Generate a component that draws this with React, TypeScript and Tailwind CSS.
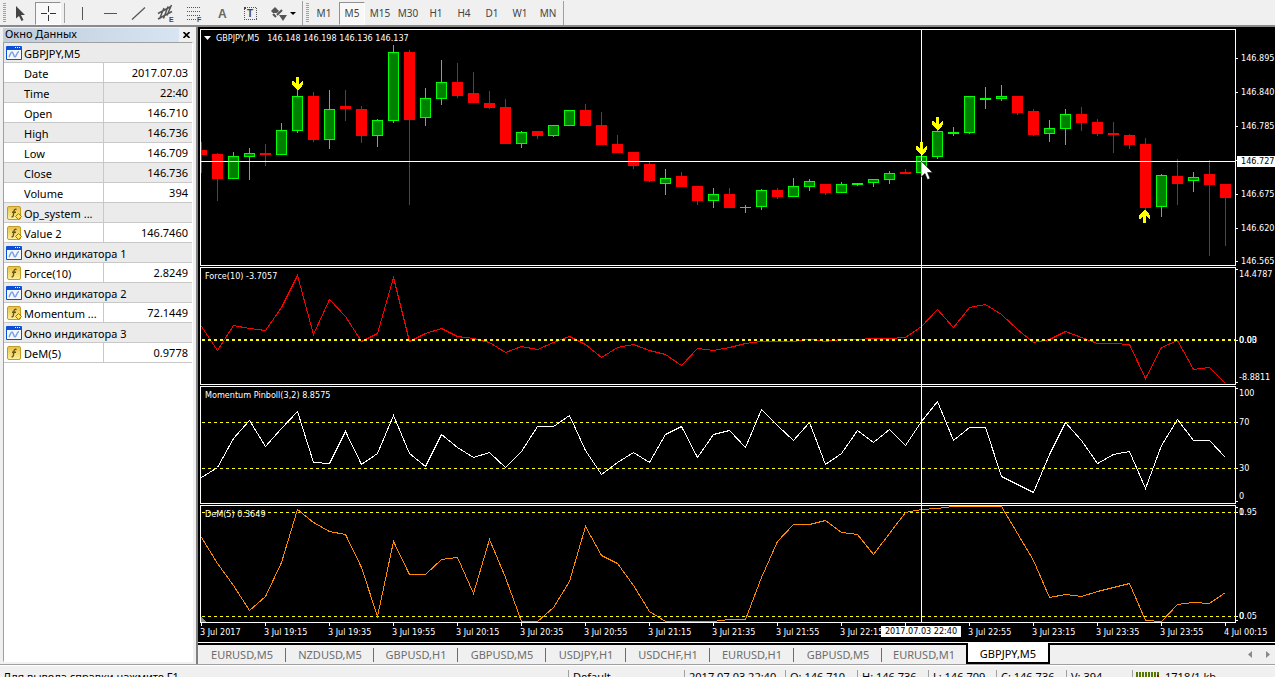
import React from "react";

const CHART_FONT = "font-['DejaVu_Sans_Condensed','DejaVu_Sans',sans-serif]";

const STEP = 16;

/* wick top, body top, body bottom, wick bottom, rising */
type Candle = [number, number, number, number, 0 | 1];

const candles: Candle[] = [
  [142, 150, 155, 173, 0], [153, 154, 179, 201, 0], [152, 156, 179, 179, 1], [148, 153, 157, 180, 1],
  [144, 153, 155, 166, 0], [123, 130, 155, 155, 1], [90, 96, 131, 133, 1], [92, 96, 140, 142, 0],
  [90, 109, 140, 149, 1], [90, 106, 109, 121, 0], [106, 109, 136, 143, 0], [119, 120, 136, 147, 1],
  [45, 52, 121, 123, 1], [50, 52, 120, 205, 0], [88, 98, 118, 126, 1], [60, 82, 99, 105, 1],
  [63, 82, 96, 98, 0], [72, 93, 103, 103, 0], [91, 103, 108, 109, 0], [99, 107, 144, 144, 0],
  [131, 132, 144, 148, 1], [131, 131, 136, 139, 0], [125, 125, 136, 137, 1], [110, 110, 126, 126, 1],
  [104, 110, 126, 126, 0], [112, 125, 145, 145, 0], [135, 144, 153, 153, 0], [152, 152, 166, 169, 0],
  [162, 164, 181, 182, 0], [169, 178, 184, 195, 1], [172, 176, 187, 187, 0], [186, 186, 201, 205, 0],
  [188, 194, 201, 208, 1], [188, 194, 208, 208, 0], [205, 207, 208, 213, 1], [189, 190, 207, 210, 1],
  [188, 190, 197, 199, 0], [178, 186, 197, 197, 1], [179, 181, 187, 191, 1], [184, 184, 193, 195, 0],
  [182, 184, 193, 193, 1], [183, 183, 185, 186, 1], [179, 179, 183, 187, 1], [171, 173, 180, 184, 1],
  [169, 172, 174, 174, 0], [156, 156, 173, 173, 1], [130, 131, 157, 159, 1], [127, 132, 134, 136, 1],
  [96, 96, 133, 134, 1], [87, 98, 100, 109, 1], [85, 96, 99, 101, 1], [96, 96, 113, 115, 0],
  [109, 111, 135, 136, 0], [120, 128, 134, 142, 1], [109, 114, 129, 145, 1], [107, 114, 123, 131, 0],
  [119, 122, 134, 136, 0], [122, 133, 135, 153, 0], [134, 135, 145, 149, 0], [138, 144, 208, 212, 0],
  [174, 175, 207, 217, 1], [159, 176, 184, 205, 0], [172, 177, 181, 192, 1], [160, 174, 185, 256, 0],
  [184, 184, 198, 246, 0],
];

const force = [
  326, 350, 325, 328, 330, 307, 275, 334, 299, 316, 341, 333, 277, 341, 333, 328, 336, 338, 342, 352, 346, 349,
  342, 336, 344, 357, 347, 344, 350, 354, 365, 348, 350, 347, 343, 341, 341, 341, 339, 341, 339, 339, 338, 338,
  337, 326, 309, 327, 307, 304, 314, 329, 342, 339, 331, 337, 343, 343, 344, 378, 347, 340, 369, 367, 383,
];
const momentum = [
  477, 467, 438, 420, 446, 428, 411, 462, 463, 431, 464, 453, 415, 453, 466, 434, 447, 457, 452, 467, 451, 426,
  426, 415, 450, 474, 462, 452, 462, 434, 426, 457, 434, 430, 447, 409, 425, 440, 422, 464, 453, 430, 442, 429,
  445, 421, 401, 440, 427, 427, 476, 484, 492, 454, 422, 440, 463, 454, 451, 488, 445, 419, 440, 440, 457,
];
const dem = [
  537, 563, 585, 610, 596, 562, 509, 522, 531, 534, 567, 616, 541, 574, 574, 559, 557, 593, 539, 577, 621, 621,
  607, 581, 526, 555, 563, 585, 611, 621, 621, 621, 621, 619, 619, 577, 541, 524, 524, 520, 532, 534, 554, 533,
  512, 509, 508, 506, 506, 506, 506, 533, 560, 597, 594, 596, 591, 587, 583, 620, 621, 604, 602, 603, 592,
];

const times = [
  "3 Jul 2017", "3 Jul 19:15", "3 Jul 19:35", "3 Jul 19:55", "3 Jul 20:15", "3 Jul 20:35", "3 Jul 20:55",
  "3 Jul 21:15", "3 Jul 21:35", "3 Jul 21:55", "3 Jul 22:15", "", "3 Jul 22:55", "3 Jul 23:15", "3 Jul 23:35",
  "3 Jul 23:55", "4 Jul 00:15",
];

type Label = { y: number; text: string; tick?: boolean };

function Panel({
  top,
  height,
  title,
  labels,
  ticks = [],
  children,
}: {
  top: number;
  height: string;
  title: React.ReactNode;
  labels: Label[];
  ticks?: number[];
  children: React.ReactNode;
}) {
  return (
    <section className={`grid shrink-0 grid-cols-[minmax(0,1fr)_39px] ${height}`}>
      <div className="relative overflow-hidden border border-white">
        <svg className="block h-full w-full" shapeRendering="crispEdges" aria-hidden="true">
          <g transform={`translate(0 ${-(top + 1)})`}>{children}</g>
        </svg>
        <h2 className="absolute left-1 top-[2px] flex items-center text-[9px] leading-3 whitespace-pre">{title}</h2>
      </div>
      <div className="relative text-[9px] leading-3">
        {ticks.map((y) => (
          <i key={y} className="absolute left-0 h-px w-[2px] bg-white" style={{ top: y - top }} />
        ))}
        {labels.map((l, i) => (
          <span key={i} className={l.tick ? "absolute left-[5px]" : "absolute left-[3px]"} style={{ top: l.y - top - 6 }}>
            {l.text}
          </span>
        ))}
      </div>
    </section>
  );
}

function Series({ data, color }: { data: number[]; color: string }) {
  return (
    <polyline
      points={data.map((y, i) => `${i * STEP + 0.5},${y + 0.5}`).join(" ")}
      fill="none"
      stroke={color}
      strokeWidth="1"
    />
  );
}

function Level({ y, thick }: { y: number; thick?: boolean }) {
  return (
    <line
      x1="1"
      x2="100%"
      y1={thick ? y : y + 0.5}
      y2={thick ? y : y + 0.5}
      stroke="#ffff00"
      strokeWidth={thick ? 2 : 1}
      strokeDasharray="3 3"
    />
  );
}

function Marker({ x, y, up }: { x: number; y: number; up?: boolean }) {
  return (
    <path
      transform={`translate(${x} ${y}) ${up ? "scale(1 -1)" : ""}`}
      d="M-1 0H2V7L5 4H6V7L5 9L2 12L1 13H0L-1 12L-4 9L-5 7V4H-4L-1 7Z"
      fill="#ffff00"
    />
  );
}

function WindowIcon() {
  return (
    <svg width="16" height="14" viewBox="0 0 16 14" className="block" aria-hidden="true">
      <rect width="16" height="14" rx="1" fill="#0a4fd6" />
      <rect x="1" y="4" width="14" height="9" fill="#f4f8ff" />
      <path d="M9 1.5h1M11 1.5h1M13 1.5h1" stroke="#fff" />
      <path d="M3 11C4 10 4.500 6 6 6S7.500 11 9 11 10.500 6 13 5.500" fill="none" stroke="#7d9be6" strokeWidth="1.500" />
    </svg>
  );
}

function FunctionIcon({ badge }: { badge?: boolean }) {
  return (
    <svg width="16" height="14" viewBox="0 0 16 14" className="block" aria-hidden="true">
      <defs>
        <linearGradient id="fx" x1="0" y1="0" x2="0" y2="1">
          <stop offset="0" stopColor="#e6c24a" />
          <stop offset="1" stopColor="#fdf09c" />
        </linearGradient>
      </defs>
      <rect x="1.500" y=".5" width="13" height="13" rx="1.500" fill="url(#fx)" stroke="#c39a24" />
      <path
        d="M10.500 3.500C9 3 8.200 3.500 8 5L7.300 9.500C7.100 10.800 6.500 11 5.500 10.700M6 6.300H10"
        fill="none"
        stroke="#6b5410"
        strokeWidth="1.400"
      />
      {badge && <path d="M12.500 7.500L15.500 10.500L12.500 13.500L9.500 10.500Z" fill="#ffe45c" stroke="#9a7a10" />}
    </svg>
  );
}

type Row = { kind?: "window" | "fn" | "fnb"; name: string; value?: string };

const rows: Row[] = [
  { kind: "window", name: "GBPJPY,M5" },
  { name: "Date", value: "2017.07.03" },
  { name: "Time", value: "22:40" },
  { name: "Open", value: "146.710" },
  { name: "High", value: "146.736" },
  { name: "Low", value: "146.709" },
  { name: "Close", value: "146.736" },
  { name: "Volume", value: "394" },
  { kind: "fnb", name: "Op_system ...", value: "" },
  { kind: "fnb", name: "Value 2", value: "146.7460" },
  { kind: "window", name: "Окно индикатора 1" },
  { kind: "fn", name: "Force(10)", value: "2.8249" },
  { kind: "window", name: "Окно индикатора 2" },
  { kind: "fnb", name: "Momentum ...", value: "72.1449" },
  { kind: "window", name: "Окно индикатора 3" },
  { kind: "fn", name: "DeM(5)", value: "0.9778" },
];

function DataWindow() {
  return (
    <aside className="flex w-[196px] shrink-0 flex-col px-[3px] pb-[2px] pt-px">
      <div className="flex h-[14px] shrink-0 items-center text-[11px] leading-[12px]">
        <h1 className="h-full flex-1 bg-linear-to-r from-[#bfcddb] to-[#d7e4f2] pl-[2px]">Окно Данных</h1>
        <button aria-label="Закрыть" className="flex h-full w-[14px] items-center justify-center">
          <svg width="7" height="6" viewBox="0 0 7 6" aria-hidden="true">
            <path d="M.5 0L6.500 6M6.500 0L.5 6" stroke="#000" strokeWidth="1.600" />
          </svg>
        </button>
      </div>
      <div className="min-h-0 flex-1 overflow-hidden border border-t-[#a0a0a0] border-l-[#a0a0a0] border-r-white border-b-white bg-white">
        <table className="w-full table-fixed border-separate border-spacing-0 text-[11px]">
          <colgroup>
            <col className="w-[100px]" />
            <col />
          </colgroup>
          <tbody>
            {rows.map((r, i) => (
              <tr key={i} className={i % 2 === 0 ? "bg-[#ebebeb]" : "bg-white"}>
                <th
                  scope="row"
                  colSpan={r.kind === "window" ? 2 : 1}
                  className={`h-5 border-b border-[#c8c8c8] p-0 text-left font-normal ${r.kind === "window" ? "" : "border-r"}`}
                >
                  <span className="flex h-[19px] items-center gap-[2px] whitespace-nowrap pl-[2px]">
                    <span className="w-4">
                      {r.kind === "window" && <WindowIcon />}
                      {r.kind === "fn" && <FunctionIcon />}
                      {r.kind === "fnb" && <FunctionIcon badge />}
                    </span>
                    <span className="pt-[2px] leading-[17px]">{r.name}</span>
                  </span>
                </th>
                {r.kind !== "window" && (
                  <td className="h-5 border-b border-[#c8c8c8] p-0 pr-1 text-right leading-[19px]">{r.value}</td>
                )}
              </tr>
            ))}
          </tbody>
        </table>
      </div>
    </aside>
  );
}

const tools: { name: string; icon: React.ReactNode }[] = [
  { name: "Вертикальная линия", icon: <path d="M10.500 4V17" stroke="#555" /> },
  { name: "Горизонтальная линия", icon: <path d="M4 10.500H17" stroke="#555" /> },
  { name: "Трендовая линия", icon: <path d="M4 16.500L17 4.500" stroke="#555" strokeWidth="1.200" /> },
  {
    name: "Канал",
    icon: (
      <>
        <path
          d="M2 10.500L15 3.500M2 16L16 8.500M3.500 16L8 5M7.500 15.500L12 3.500M11 12.500L15.500 2"
          stroke="#555"
          strokeWidth="1.500"
        />
        <text x="13" y="19" fontSize="7" fontWeight="bold" fill="#444">E</text>
      </>
    ),
  },
  {
    name: "Фибоначчи",
    icon: (
      <>
        <path d="M3 4.500H17M3 8.500H17M3 12.500H17M3 16.500H12" stroke="#555" strokeDasharray="1 1" shapeRendering="crispEdges" />
        <text x="13" y="19" fontSize="7" fontWeight="bold" fill="#444">F</text>
      </>
    ),
  },
  { name: "Текст", icon: <text x="6" y="15" fontSize="12" fontWeight="bold" fill="#666">A</text> },
  {
    name: "Метка",
    icon: (
      <>
        <rect x="4.500" y="4.500" width="12" height="12" fill="none" stroke="#555" strokeDasharray="1 1" shapeRendering="crispEdges" />
        <path d="M4 4H6V6H4Z" fill="#444" />
        <text x="7" y="14" fontSize="10" fontWeight="bold" fill="#444">T</text>
      </>
    ),
  },
];

const frames = ["M1", "M5", "M15", "M30", "H1", "H4", "D1", "W1", "MN"];

function Grip() {
  return (
    <svg width="3" height="20" className="shrink-0" shapeRendering="crispEdges" aria-hidden="true">
      <path d="M1.500 0V20" stroke="#a0a0a0" strokeWidth="3" strokeDasharray="1 1" />
    </svg>
  );
}

function ToolBar() {
  return (
    <header className="flex h-[27px] shrink-0 items-center border-b-2 border-[#8a8a8a] bg-[#f0f0f0] pl-[3px] pt-px">
      <Grip />
      <button aria-label="Курсор" className="flex h-[23px] w-7 items-center justify-center">
        <svg width="21" height="21" aria-hidden="true">
          <path d="M6 3V15.500L9 13L11.500 18L13.500 17L11 12H15Z" fill="#444" />
        </svg>
      </button>
      <button
        aria-label="Перекрестие"
        aria-pressed="true"
        className="mx-px flex h-[23px] w-[26px] items-center justify-center border border-t-[#909090] border-l-[#909090] border-r-white border-b-white bg-[#f8f8f8]"
      >
        <svg width="17" height="17" shapeRendering="crispEdges" aria-hidden="true">
          <path d="M8.500 1V7M8.500 10V16M1 8.500H7M10 8.500H16" stroke="#333" />
        </svg>
      </button>
      <i className="ml-[2px] mr-[3px] h-5 w-px bg-[#a0a0a0]" />
      {tools.map((t) => (
        <button key={t.name} aria-label={t.name} className="flex h-[23px] w-7 items-center justify-center">
          <svg width="21" height="21" className="overflow-visible font-['Liberation_Sans',sans-serif]" aria-hidden="true">
            {t.icon}
          </svg>
        </button>
      ))}
      <button aria-label="Стрелки" className="flex h-[23px] w-9 items-center justify-center">
        <svg width="27" height="21" aria-hidden="true">
          <path d="M6 4L10 8L8 10H4L2 8Z M10 12H18L14 18Z" fill="#555" />
          <path d="M4 11L7 14M8 12L13 7" stroke="#555" strokeWidth="2" />
          <path d="M21 9H27L24 12Z" fill="#000" />
        </svg>
      </button>
      <span className="ml-[2px] mr-[3px] h-full w-px bg-[#a0a0a0]" />
      <Grip />
      <span className="flex pl-px">
        {frames.map((f) => (
          <button
            key={f}
            aria-pressed={f === "M5"}
            className={
              f === "M5"
                ? "mx-px h-[23px] w-[26px] border border-t-[#909090] border-l-[#909090] border-r-white border-b-white bg-[#f8f8f8] text-[10px] text-[#444]"
                : "h-[23px] w-7 text-[10px] text-[#444]"
            }
          >
            {f}
          </button>
        ))}
      </span>
      <span className="ml-px h-full w-px bg-[#a0a0a0]" />
    </header>
  );
}

function Chart() {
  return (
    <main className={`relative flex flex-1 flex-col gap-px overflow-hidden bg-black pl-[2px] pt-[2px] text-white ${CHART_FONT}`}>
      <Panel
        top={29}
        height="h-[237px]"
        title={
          <>
            <svg width="7" height="4" className="ml-[-1px] mr-[5px]" aria-hidden="true">
              <path d="M0 0H7L3.500 4Z" fill="#fff" />
            </svg>
            GBPJPY,M5{"   "}146.148 146.198 146.136 146.137
          </>
        }
        ticks={[58, 92, 126, 160, 194, 228, 261]}
        labels={[
          { y: 58, text: "146.895", tick: true },
          { y: 92, text: "146.840", tick: true },
          { y: 126, text: "146.785", tick: true },
          { y: 194, text: "146.675", tick: true },
          { y: 228, text: "146.620", tick: true },
          { y: 261, text: "146.565", tick: true },
        ]}
      >
        {candles.map(([hi, top, bottom, lo, up], i) => {
          const x = i * STEP;
          const color = up ? "#00ff00" : "#ff0000";
          return (
            <g key={i}>
              <rect x={x} y={hi} width="1" height={lo - hi} fill={up ? "#00ff00" : "#f00000"} />
              <rect x={x - 5} y={top} width="11" height={bottom - top} fill={color} />
              {up === 1 && bottom - top > 2 && (
                <rect x={x - 4} y={top + 1} width="9" height={bottom - top - 2} fill="#008000" />
              )}
            </g>
          );
        })}
        <Marker x={96} y={77} />
        <Marker x={720} y={142} />
        <Marker x={736} y={117} />
        <Marker x={943} y={223} up />
        <rect x="0" y="161" width="100%" height="1" fill="#fff" />
      </Panel>
      <Panel
        top={267}
        height="h-[118px]"
        title="Force(10) -3.7057"
        ticks={[269, 340, 382]}
        labels={[
          { y: 274, text: "14.4787" },
          { y: 340, text: "0.00" },
          { y: 340, text: "0.03" },
          { y: 377, text: "-8.8811" },
        ]}
      >
        <Series data={force} color="#ff0000" />
        <Level y={340} thick />
      </Panel>
      <Panel
        top={386}
        height="h-[118px]"
        title="Momentum Pinboll(3,2) 8.8575"
        ticks={[388, 422, 468, 501]}
        labels={[
          { y: 393, text: "100" },
          { y: 422, text: "70" },
          { y: 468, text: "30" },
          { y: 496, text: "0" },
        ]}
      >
        <Level y={422} />
        <Level y={468} />
        <Series data={momentum} color="#ffffff" />
      </Panel>
      <Panel
        top={505}
        height="h-[118px]"
        title="DeM(5) 0.3649"
        ticks={[507, 512, 616, 620]}
        labels={[
          { y: 512, text: "0.95" },
          { y: 512, text: "1" },
          { y: 616, text: "0.05" },
          { y: 616, text: "0" },
        ]}
      >
        <Level y={512} />
        <Level y={616} />
        <path d="M0 617L5 622H0Z" fill="#778899" />
        <Series data={dem} color="#ff8c00" />
      </Panel>
      <div className="relative -mt-px h-[19px] shrink-0 text-[9px] leading-3">
        {times.map((t, i) => (
          <span key={i} className="absolute top-0 whitespace-nowrap pt-[3px]" style={{ left: i * 64 }}>
            <i className="absolute left-px top-0 h-[3px] w-px bg-white" />
            {t}
          </span>
        ))}
        <span className="absolute left-[681px] top-[3px] h-[11px] w-[80px] bg-white text-center leading-[11px] text-black">
          2017.07.03 22:40
        </span>
      </div>
      <i className="absolute left-[723px] top-[2px] h-[594px] w-px bg-white" />
      <span className="absolute right-0 top-[129px] h-[11px] w-[38px] bg-white pl-1 text-[9px] leading-[11px] text-black">
        146.727
      </span>
      <svg width="12" height="19" className="absolute left-[723px] top-[134px]" aria-hidden="true">
        <path d="M0 0V16L4 12.500L6.500 18.500L9 17.500L6.500 11.500H11.500Z" fill="#fff" stroke="#000" strokeWidth=".5" />
      </svg>
    </main>
  );
}

const tabs: [string, string][] = [
  ["EURUSD,M5", "w-[88px]"],
  ["NZDUSD,M5", "w-[88px]"],
  ["GBPUSD,H1", "w-[84px]"],
  ["GBPUSD,M5", "w-[88px]"],
  ["USDJPY,H1", "w-[80px]"],
  ["USDCHF,H1", "w-[84px]"],
  ["EURUSD,H1", "w-[84px]"],
  ["GBPUSD,M5", "w-[88px]"],
  ["EURUSD,M1", "w-[84px]"],
];

function ChartTabs() {
  return (
    <nav className="flex h-[22px] shrink-0 border-t border-white bg-[#f0f0f0] text-[11px]">
      <div className="flex h-[21px] flex-1 border-t-2 border-black">
        {tabs.map(([name, width], i) => (
          <button key={i} className={`relative h-[19px] text-center leading-[19px] text-[#6d6d6d] ${width}`}>
            {name}
            {i < tabs.length - 1 && <i className="absolute right-0 top-[3px] h-[14px] w-px bg-[#6d6d6d]" />}
          </button>
        ))}
        <button className="-mt-[2px] h-[21px] w-[84px] border-2 border-t-0 border-black bg-white text-center leading-[21px]">GBPJPY,M5</button>
        <span className="ml-auto flex items-center gap-[14px] pr-[5px]">
          <button aria-label="Назад" className="block">
            <svg width="4" height="7" className="block"><path d="M4 0V7L0 3.500Z" fill="#8a8a8a" /></svg>
          </button>
          <button aria-label="Вперёд" className="block">
            <svg width="4" height="7" className="block"><path d="M0 0V7L4 3.500Z" fill="#8a8a8a" /></svg>
          </button>
        </span>
      </div>
    </nav>
  );
}

const fields: [string, string][] = [
  ["Default", "w-[116px]"],
  ["2017.07.03 22:40", "w-[101px]"],
  ["O: 146.710", "w-[72px]"],
  ["H: 146.736", "w-[71px]"],
  ["L: 146.709", "w-[68px]"],
  ["C: 146.736", "w-[70px]"],
  ["V: 394", "w-[66px]"],
];

function StatusBar() {
  return (
    <footer className="flex h-3 shrink-0 items-start overflow-hidden border-t border-white bg-[#f0f0f0] text-[11px] leading-[22px] whitespace-nowrap">
      <span className="flex-1 pl-[3px]">Для вывода справки нажмите F1</span>
      {fields.map(([text, width]) => (
        <span key={text} className={`mt-1 border-l border-[#a0a0a0] pl-1 leading-[14px] ${width}`}>
          {text}
        </span>
      ))}
      <span className="mt-1 flex w-[143px] gap-[5px] border-l border-[#a0a0a0] pl-[3px] leading-[14px]">
        <svg width="24" height="10" shapeRendering="crispEdges" className="mt-[2px]" aria-hidden="true">
          <path d="M1 0V10M4 0V10M7 0V10M10 0V10M13 0V10M16 0V10M19 0V5M22 0V3" stroke="#567800" strokeWidth="2" />
          <path d="M16 6V10M19 5V10M22 3V10" stroke="#901000" strokeWidth="2" />
        </svg>
        1718/1 kb
      </span>
    </footer>
  );
}

export default function App() {
  return (
    <div className="flex h-screen flex-col overflow-hidden bg-[#f0f0f0] font-['Noto_Sans',sans-serif] text-black">
      <ToolBar />
      <div className="flex min-h-0 flex-1 border-b border-[#a0a0a0]">
        <DataWindow />
        <div className="flex min-w-0 flex-1 flex-col border-l-2 border-[#808080]">
          <Chart />
          <ChartTabs />
        </div>
      </div>
      <StatusBar />
    </div>
  );
}
